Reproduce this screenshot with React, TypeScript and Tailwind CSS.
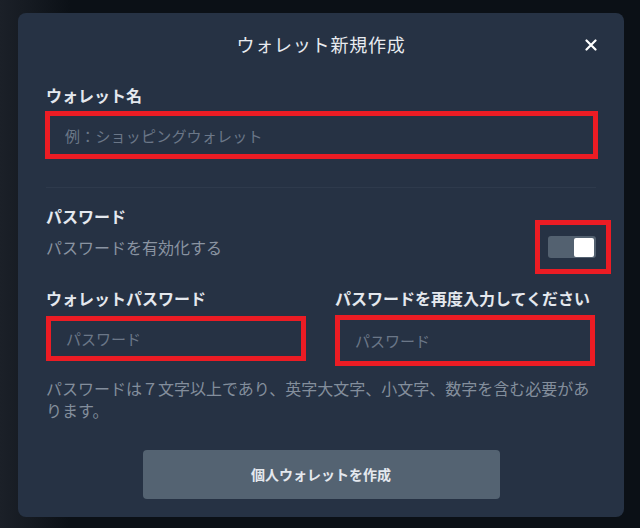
export default function App() {
  const font = { fontFamily: '"Noto Sans CJK JP", "Noto Sans", sans-serif' };
  return (
    <div
      className="w-[640px] h-[528px] overflow-hidden bg-[linear-gradient(to_right,#1b2028_0px,#151a21_30px,#0b1016_70px)] pt-[13px] pl-[18px]"
      style={font}
    >
      <div className="relative w-[606px] h-[504px] rounded-[8px] bg-[#263244] px-[28px] pt-[19px]">
        <h2 className="text-center text-[18px] leading-[24px] font-normal tracking-[0.8px] text-[#e8ebf0]">ウォレット新規作成</h2>
        <button className="absolute right-[27px] top-[26px] text-white">
          <svg width="12" height="12" viewBox="0 0 12 12">
            <path d="M1.5 1.5 L10.5 10.5 M10.5 1.5 L1.5 10.5" stroke="currentColor" strokeWidth="2.2" strokeLinecap="round" />
          </svg>
        </button>

        <div className="mt-[27px] text-[16px] leading-[24px] font-bold text-[#e4e8ee]">ウォレット名</div>
        <input
          className="mt-[4px] -ml-px block w-[553px] h-[48px] border-[5px] border-[#ec1c24] bg-transparent pl-[15px] text-[15px] tracking-[0.2px] text-[#e4e8ee] placeholder:text-[#6b7788] outline-none"
          placeholder="例：ショッピングウォレット"
        />

        <div className="mt-[28px] h-px bg-[#2e3a4c]" />

        <div className="mt-[16px] text-[16px] leading-[24px] font-bold text-[#e4e8ee]">パスワード</div>
        <div className="mt-[7px] flex items-center justify-between">
          <span className="text-[16px] leading-[24px] text-[#8a94a2]">パスワードを有効化する</span>
          <div className="relative">
            <div className="flex h-[22px] w-[48px] items-center justify-end rounded-[3px] bg-[#536170] pr-[2px]">
              <div className="h-[19px] w-[20px] rounded-[2px] bg-white" />
            </div>
            <span className="pointer-events-none absolute -left-[13px] -right-[15px] -top-[16px] -bottom-[16px] border-[5px] border-[#ec1c24]" />
          </div>
        </div>

        <div className="mt-[27px] grid grid-cols-2 gap-x-[28px]">
          <div>
            <div className="text-[16px] leading-[24px] font-bold text-[#e4e8ee]">ウォレットパスワード</div>
            <input
              type="password"
              className="mt-[6px] block w-[260px] h-[45px] border-[5px] border-[#ec1c24] bg-transparent pl-[15px] text-[15px] text-[#e4e8ee] placeholder:text-[#6b7788] outline-none"
              placeholder="パスワード"
            />
          </div>
          <div>
            <div className="text-[16px] leading-[24px] font-bold text-[#e4e8ee]">パスワードを再度入力してください</div>
            <input
              type="password"
              className="mt-[5px] block w-[260px] h-[51px] border-[5px] border-[#ec1c24] bg-transparent pl-[15px] text-[15px] text-[#e4e8ee] placeholder:text-[#6b7788] outline-none"
              placeholder="パスワード"
            />
          </div>
        </div>

        <p className="mt-[11px] text-[16px] leading-[22px] text-[#838e9c]">
          パスワードは７文字以上であり、英字大文字、小文字、数字を含む必要があります。
        </p>

        <button className="mx-auto mt-[29px] block h-[49px] w-[357px] rounded-[4px] bg-[#546372] text-[14px] font-bold text-[#e4e8ee]">
          個人ウォレットを作成
        </button>
      </div>
    </div>
  );
}
